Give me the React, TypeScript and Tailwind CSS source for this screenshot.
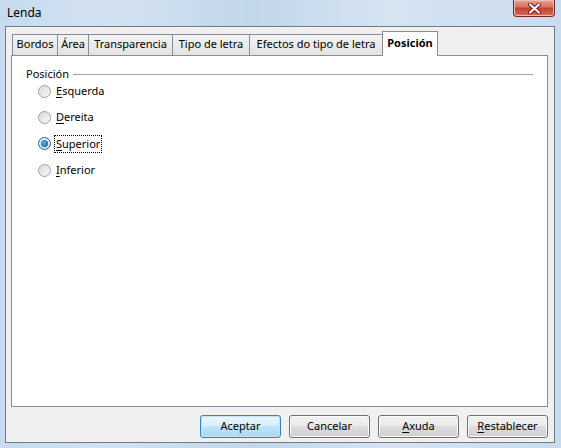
import React from "react"

const tabs = [
  { label: "Bordos", w: "w-[46px]" },
  { label: "Área", w: "w-[32px]" },
  { label: "Transparencia", w: "w-[85px]" },
  { label: "Tipo de letra", w: "w-[78px]" },
  { label: "Efectos do tipo de letra", w: "w-[134px]" },
]

const options = [
  { key: "E", rest: "squerda", checked: false },
  { key: "D", rest: "ereita", checked: false },
  { key: "S", rest: "uperior", checked: true },
  { key: "I", rest: "nferior", checked: false },
]

function Radio({ checked }: { checked: boolean }) {
  return (
    <span
      className={
        "flex h-[13px] w-[13px] shrink-0 items-center justify-center rounded-full border " +
        (checked
          ? "border-[#2c628b] bg-[linear-gradient(#e6f4fc,#c4e5f6)]"
          : "border-[#a2a2a2] bg-[linear-gradient(135deg,#d6d6d6,#fafafa)]")
      }
    >
      {checked ? (
        <span className="h-[7px] w-[7px] rounded-full bg-[radial-gradient(circle_at_40%_40%,#5eb2e6,#0d4a7e)]" />
      ) : (
        <span className="h-[9px] w-[9px] rounded-full bg-[linear-gradient(135deg,#dcdcdc,#f6f6f6)]" />
      )}
    </span>
  )
}

function Button({
  children,
  primary,
}: {
  children: React.ReactNode
  primary?: boolean
}) {
  return (
    <div
      className={
        "flex h-[23px] w-[81px] items-center justify-center rounded-[3px] border text-black " +
        (primary
          ? "border-[#3c7fb1] bg-[linear-gradient(#eaf6fd_0%,#d9f0fc_45%,#bee6fd_50%,#a7d9f5_100%)] shadow-[inset_0_0_0_1px_#c4e5f6]"
          : "border-[#707070] bg-[linear-gradient(#f2f2f2_0%,#ebebeb_45%,#dddddd_50%,#cfcfcf_100%)] shadow-[inset_0_0_0_1px_#fcfcfc]")
      }
    >
      {children}
    </div>
  )
}

export default function App() {
  return (
    <div
      className="flex h-[448px] w-[561px] flex-col bg-[linear-gradient(90deg,#c7daee_0%,#d3e2f1_20%,#c2d6ea_45%,#d6e4f2_70%,#c9dbee_100%)] text-[11px] text-black"
      style={{ fontFamily: '"Noto Sans", "Open Sans", sans-serif' }}
    >
      {/* title bar */}
      <div className="relative flex h-[26px] shrink-0 items-center pl-[7px] text-[12px]">
        <span className="-mt-[1px]">Lenda</span>
        <div className="absolute right-[6px] top-0 flex h-[17px] w-[42px] items-center justify-center rounded-b-[4px] border border-t-0 border-[#6d2a22] bg-[linear-gradient(#e8a293_0%,#d5705c_45%,#c2412b_50%,#d5705c_100%)] shadow-[inset_0_0_0_1px_#eec0b6]">
          <svg width="13" height="11" viewBox="0 0 13 11">
            <path
              d="M2 1.5 L11 9.5 M11 1.5 L2 9.5"
              stroke="#5b1a12"
              strokeWidth="4"
              strokeLinecap="round"
            />
            <path
              d="M2 1.5 L11 9.5 M11 1.5 L2 9.5"
              stroke="#ffffff"
              strokeWidth="2.2"
              strokeLinecap="round"
            />
          </svg>
        </div>
      </div>

      {/* client area */}
      <div className="mb-[5px] ml-[5px] mr-[6px] flex flex-1 flex-col border border-[#6f7c8a] bg-[#f0f0f0] pl-[5px] pr-[6px] pt-[4px]">
        {/* tabs */}
        <div className="relative z-10 flex h-[24px] items-end">
          <div className="w-[1px]" />
          {tabs.map((t) => (
            <div
              key={t.label}
              className={
                "-mr-px flex h-[21px] items-center justify-center border border-b-0 border-[#898c95] bg-[linear-gradient(#f3f3f3,#e3e3e3)] pb-[1px] whitespace-nowrap " +
                t.w
              }
            >
              {t.label}
            </div>
          ))}
          <div className="relative -mb-px flex h-[25px] w-[56px] items-center justify-center border border-b-0 border-[#898c95] bg-white pb-[1px] font-bold">
            Posición
          </div>
        </div>

        {/* panel */}
        <div className="h-[352px] border border-[#898c95] bg-white px-[14px] pt-[10px]">
          <div className="flex h-[16px] items-center gap-[4px]">
            <span>Posición</span>
            <div className="h-px flex-1 bg-[#a5a5a5]" />
          </div>
          <div className="-mt-[4px] flex flex-col pl-[12px]">
            {options.map((o) => (
              <div key={o.key} className="flex h-[26.3px] items-center gap-[3px]">
                <Radio checked={o.checked} />
                <span
                  className={
                    "px-[1px] leading-[16px] " +
                    (o.checked
                      ? "border border-dotted border-black"
                      : "border border-transparent")
                  }
                >
                  <span className="underline underline-offset-2">{o.key}</span>
                  {o.rest}
                </span>
              </div>
            ))}
          </div>
        </div>

        {/* buttons */}
        <div className="mt-[8px] flex justify-end gap-[8px]">
          <Button primary>Aceptar</Button>
          <Button>Cancelar</Button>
          <Button>
            <span>
              <span className="underline underline-offset-2">A</span>xuda
            </span>
          </Button>
          <Button>
            <span>
              <span className="underline underline-offset-2">R</span>
              establecer
            </span>
          </Button>
        </div>
      </div>
    </div>
  )
}
